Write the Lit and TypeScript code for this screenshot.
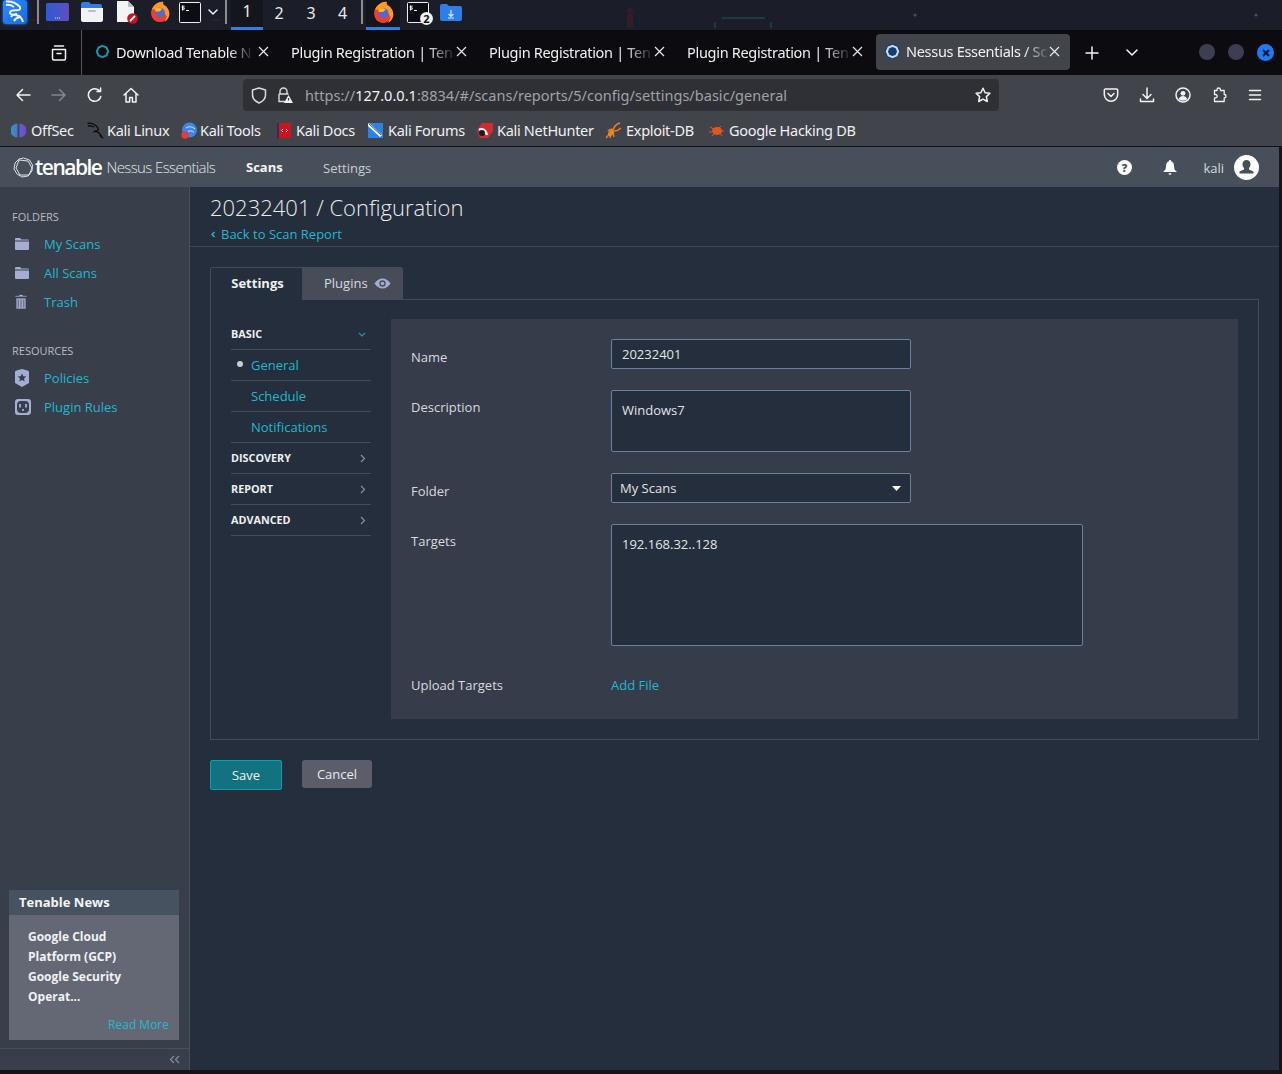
import { LitElement, html, css, svg } from "lit";
import { customElement } from "lit/decorators.js";

const ic = (w: number, h: number, body: unknown, vb = `0 0 ${w} ${h}`) =>
  html`<svg width=${w} height=${h} viewBox=${vb}>${body}</svg>`;

const S = `fill:none;stroke:#f2f2f2;stroke-width:1.5;stroke-linecap:round;stroke-linejoin:round`;
const line = (d: string, style = S) => svg`<path d=${d} style=${style}></path>`;

const firefox = (s: number) =>
  ic(s, s, svg`
    <circle cx="11.5" cy="12.5" r="9.5" fill="#e8412f"></circle>
    <path d="M3 9C5 3 11 0 15 1c-1 2 0 3 3 5 3 3 4 7 3 10-1 3-3 5-5 6 3-4 2-9-1-11-2-2-7-3-12-2z" fill="#ff9a1f"></path>
    <path d="M3 16c2 5 8 7 12 5 3-2 4-4 4-6-3 4-9 5-16 1z" fill="#f5392f"></path>
    <circle cx="11.5" cy="12" r="5" fill="#4f68d8"></circle>
    <path d="M6 9c2-2 5-2 8-1l-3 3H7z" fill="#ffb324"></path>`, "0 0 23 23");

const terminal = html`<svg width="22" height="21" viewBox="0 0 22 21">
  <rect x=".5" y=".5" width="21" height="20" rx="1" fill="#0c0d12" stroke="#f0f0f0"></rect>
  <path d="M3.5 3.5v5M5.6 4.2H3.2v1.6h2v1.5H2.8M7 8.5h3" fill="none" stroke="#f0f0f0" stroke-width="1"></path></svg>`;

const folderBlue = html`<svg width="22" height="17" viewBox="0 0 22 17">
  <path d="M0 2a2 2 0 0 1 2-2h5l2 2h11a2 2 0 0 1 2 2v11a2 2 0 0 1-2 2H2a2 2 0 0 1-2-2z" fill="#2f7de6"></path>
  <path d="M11 6v6M8.5 10l2.5 2.5 2.5-2.5M8 14h6" fill="none" stroke="#cfe3ff" stroke-width="1.2"></path></svg>`;

const tabIcon = (active: boolean) => html`<svg width="15" height="15" viewBox="0 0 15 15">
  ${active ? svg`<circle cx="7.5" cy="7.5" r="7.5" fill="#123f72"></circle>` : ""}
  <path d="M7.5 1.8 11.500 3.500 13.200 7.500 11.500 11.500 7.500 13.200 3.500 11.500 1.800 7.500 3.500 3.500z" fill="none" stroke=${active ? "#c9dbe9" : "#1a93ad"} stroke-width="2"></path></svg>`;

const navIcons = {
  back: ic(16, 14, line("M15 7H2M7.5 1.5 2 7l5.5 5.5")),
  fwd: ic(16, 14, line("M1 7h13M8.5 1.5 14 7l-5.5 5.5", S.replace("#f2f2f2", "#85878d"))),
  reload: ic(16, 16, line("M13.8 9.5A6.3 6.3 0 1 1 12 3.4M13.6 1v3.6H10")),
  home: ic(16, 16, line("M1 8l7-6.5L15 8M3 6.5V15h3.6v-4.5h2.8V15H13V6.5")),
  pocket: ic(16, 16, line("M2.5 2h11A1.2 1.2 0 0 1 14.7 3.2v4.3a6.7 6.7 0 0 1-13.4 0V3.2A1.2 1.2 0 0 1 2.5 2zM5 6.5l3 3 3-3")),
  download: ic(16, 16, line("M8 1v10M4 7.5 8 11.5l4-4M1.5 12v2.5h13V12")),
  account: ic(16, 16, svg`<circle cx="8" cy="8" r="7" style=${S}></circle><circle cx="8" cy="6.3" r="2.4" fill="#f2f2f2"></circle><path d="M3.6 12c1-2 2.6-3 4.4-3s3.400 1 4.400 3c-2.400 2.300-6.400 2.300-8.800 0z" fill="#f2f2f2"></path>`),
  ext: ic(16, 16, line("M6 3.500V2.700a1.700 1.700 0 0 1 3.400 0v.8h3.800v4h.1a1.700 1.700 0 0 1 0 3.400h-.1v3.600H3.500v-3.600h1a1.300 1.300 0 0 0 0-3.400h-1v-4z", S.replace("1.5", "1.3"))),
  menu: ic(16, 14, line("M2.500 2.500h11M2.500 7h11M2.500 11.500h11")),
};

const bmIcons: Record<string, unknown> = {
  offsec: html`<svg width="15" height="15" viewBox="0 0 15 15"><defs><linearGradient id="os" x1="0" x2="1"><stop offset="0" stop-color="#2b9ac9"></stop><stop offset="1" stop-color="#7a3fd0"></stop></linearGradient></defs><path d="M6.500 0.500A7 7 0 0 0 6.500 14.500zM8.500 0.500A7 7 0 0 1 8.500 14.500z" fill="url(#os)"></path></svg>`,
  kali: html`<svg width="17" height="17" viewBox="0 0 17 17"><path d="M0.500 1.500c3-.8 6 .2 8.500 2.300 2 1.700 2.700 3 2.200 4.200-.5 1.300-3 .7-4 1.700 2.300-.3 5.500 1 7 4.500.7 1 1.300 1.600 2 2-1.500-1-3-2-3.500-3.500M1 4c2-.5 4 0 6 1" fill="none" stroke="#0b0b0b" stroke-width="1.300"></path></svg>`,
  tools: html`<svg width="16" height="17" viewBox="0 0 16 17"><circle cx="8.500" cy="8" r="7.500" fill="#3a86e8"></circle><path d="M5 6c3-2 6-1.500 9 1M7 9.500c2-1 4-1 6 1" fill="none" stroke="#dbe9fb"></path><circle cx="4" cy="13" r="3.800" fill="#e33a3a"></circle></svg>`,
  docs: html`<svg width="14" height="17" viewBox="0 0 14 17"><rect width="14" height="15" y="1" fill="#c9151b"></rect><rect width="2" height="16" y="1" fill="#243456"></rect><path d="M6 7 4.500 8.500 6 10M9 7l1.500 1.500L9 10" fill="none" stroke="#fff"></path></svg>`,
  forums: html`<svg width="15" height="16" viewBox="0 0 15 16"><rect y="1" width="15" height="15" fill="#2b83e3"></rect><path d="M0 2l13 12" stroke="#fff" stroke-width="3"></path><path d="M1 2l12 11" stroke="#222" stroke-width=".8"></path></svg>`,
  hunter: html`<svg width="16" height="15" viewBox="0 0 16 15"><path d="M5 0h11v8l-5 7H3L0 8z" fill="#d42b2f"></path><path d="M2 7c3-2 7 0 8 5" fill="none" stroke="#fff" stroke-width="2.500"></path><circle cx="5" cy="10" r="3" fill="#1b1b1b"></circle></svg>`,
  exploit: html`<svg width="17" height="17" viewBox="0 0 17 17"><path d="M1 16 8 8M3 9c2-2 4-2 5-1M8 8c1-3 3-6 7-7M9 9c2 0 5-1 7-3M8 10l1 5M6 11l-1 5" fill="none" stroke="#e8871f" stroke-width="1.300"></path><ellipse cx="6" cy="11" rx="2.500" ry="3.500" transform="rotate(40 6 11)" fill="#e8871f"></ellipse></svg>`,
  ghdb: html`<svg width="15" height="13" viewBox="0 0 15 13"><ellipse cx="8" cy="7" rx="5" ry="4" fill="#e2571e"></ellipse><path d="M1 3l4 2M0 8h3M3 12l3-3M12 2 10 4M15 7h-3M13 12l-2-3" stroke="#e2571e"></path></svg>`,
};

const bookmarks = [
  ["offsec", "OffSec", 11, 5],
  ["kali", "Kali Linux", 87, 3],
  ["tools", "Kali Tools", 181, 3],
  ["docs", "Kali Docs", 277, 5],
  ["forums", "Kali Forums", 368, 5],
  ["hunter", "Kali NetHunter", 477, 4],
  ["exploit", "Exploit-DB", 605, 4],
  ["ghdb", "Google Hacking DB", 709, 5],
] as const;

const folderIc = html`<svg width="14" height="12" viewBox="0 0 14 12"><path d="M0 2.500V1a1 1 0 0 1 1-1h4l1.500 1.500H13a1 1 0 0 1 1 1zM0 3.500h14V11a1 1 0 0 1-1 1H1a1 1 0 0 1-1-1z" fill="#a4aed0"></path></svg>`;
const trashIc = html`<svg width="12" height="15" viewBox="0 0 12 15"><path d="M4 1.500V.5h4v1h4V3H0V1.500zM1 4h10v11H1zM3.200 5.500v8M6 5.500v8M8.800 5.500v8" fill="#a4aed0" stroke="#383e4a" stroke-width=".7"></path></svg>`;
const policyIc = html`<svg width="14" height="18" viewBox="0 0 14 18"><path d="M1.500 1.500 7 0l5.500 1.500A1.500 1.500 0 0 1 14 3v11l-7 4-7-4V3a1.500 1.500 0 0 1 1.500-1.500z" fill="#a4aed0"></path><path d="m7 4.500 1.300 2.800 3 .3-2.300 2 .7 3L7 11l-2.700 1.600.7-3-2.300-2 3-.3z" fill="#383e4a"></path></svg>`;
const pluginIc = html`<svg width="16" height="16" viewBox="0 0 16 16"><rect width="16" height="16" rx="3" fill="#a4aed0"></rect><rect x="2" y="2" width="12" height="12" rx="4" fill="#383e4a"></rect><path d="M5 5v3.500M11 5v3.500M8 10v2" stroke="#a4aed0" stroke-width="1.800"></path></svg>`;

@customElement("app-root")
export class AppRoot extends LitElement {
  static styles = css`
    :host { display: block; width: 1282px; height: 1074px; overflow: hidden; position: relative; background: #14151b; font-family: "Open Sans", "Noto Sans", sans-serif; }
    svg { display: block; flex: none; }
    .taskbar { height: 30px; background: #1b1e29; display: flex; position: relative; }
    .tb { height: 30px; display: flex; align-items: center; justify-content: center; box-sizing: border-box; flex: none; padding-bottom: 6px; color: #e8eaf0; font: 400 16px "Noto Sans", sans-serif; position: relative; z-index: 1; }
    .tb.on { border-bottom: 3px solid #2f7fe0; padding-bottom: 3px; background: #14161e; }
    .tb.ws { padding-bottom: 5px; }
    .tsep { width: 2px; height: 24px; background: #8a8c92; flex: none; position: relative; z-index: 1; }
    .kalibtn { width: 24px; height: 24px; border-radius: 3px; background: linear-gradient(135deg, #2f8dff, #1668e6); box-shadow: 0 0 3px #1f7dff; margin-left: 3px; margin-right: 10px; display: flex; justify-content: center; position: relative; z-index: 1; }
    .marks { position: absolute; left: 560px; top: 0; }
    .marksl { position: absolute; left: 0; top: 0; }
    .badge { position: absolute; left: 13px; top: 10px; }
    .termwrap { position: relative; }

    .tabbar { height: 45px; background: #0c0c10; display: flex; align-items: stretch; color: #f0f0f2; font: 400 14.5px "Noto Sans", sans-serif; letter-spacing: -.3px; }
    .tmgr { width: 81px; border-right: 1px solid #54565c; display: flex; align-items: center; justify-content: center; flex: none; }
    .tmgr svg { margin-left: 37px; }
    .tab { width: 198px; flex: none; box-sizing: border-box; display: flex; align-items: center; padding-left: 11px; padding-bottom: 2px; position: relative; }
    .tab.first { padding-left: 13px; }
    .tab.active { width: 194px; height: 36px; margin: 4px 0 0 2px; background: #42444c; border-radius: 4px; padding-left: 9px; }
    .tab .ttl { flex: none; white-space: nowrap; -webkit-mask-image: linear-gradient(to right, #000 84%, rgba(0,0,0,.12) 100%); mask-image: linear-gradient(to right, #000 84%, rgba(0,0,0,.12) 100%); }
    .tab.first .ttl { margin-left: 6px; }
    .tab.active .ttl { margin-left: 6px; }
    .tab .x { position: absolute; left: 176px; top: 16px; }
    .tab.active .x { left: 173px; top: 12px; }
    .tabplus { margin-left: 15px; align-self: center; }
    .tabchev { margin-left: 27px; align-self: center; }
    .wins { display: flex; gap: 13px; margin-left: 61px; align-self: center; }
    .wbtn { width: 16px; height: 16px; border-radius: 50%; background: #3b3f50; display: flex; align-items: center; justify-content: center; }
    .wbtn.close { width: 17px; height: 17px; background: #2079ef; }

    .toolbar { height: 40px; background: #42444c; display: flex; align-items: center; padding-left: 5px; }
    .nbtn { width: 36px; height: 32px; display: flex; align-items: center; justify-content: center; flex: none; }
    .urlbar { width: 756px; height: 32px; margin-left: 94px; margin-right: 94px; background: #2f3036; border-radius: 4px; display: flex; align-items: center; flex: none; box-sizing: border-box; padding-left: 8px; color: #a0a1a6; font: 400 14.5px "Noto Sans", sans-serif; position: relative; }
    .urlbar b { font-weight: 400; color: #f5f5f5; }
    .url { margin-left: 12px; white-space: nowrap; letter-spacing: .03px; }
    .lock { margin-left: 10px; }
    .star { position: absolute; right: 8px; top: 8px; }

    .bmbar { height: 31px; background: #42444c; border-bottom: 1px solid #111216; color: #f0f0f2; font: 400 14.5px "Noto Sans", sans-serif; letter-spacing: -.3px; position: relative; }
    .bm { position: absolute; top: 0; height: 30px; display: flex; align-items: center; white-space: nowrap; }

    .hdr { height: 40px; background: #47505a; display: flex; align-items: center; position: relative; color: #fff; }
    .brand { display: flex; align-items: center; margin-left: 13px; width: 233px; flex: none; }
    .tenable { font: 600 21px "Open Sans", sans-serif; letter-spacing: -1.5px; margin-left: 1px; }
    .ness { font: 300 15px "Open Sans", sans-serif; letter-spacing: -.6px; margin-left: 5px; color: #e4e6e9; }
    .scans { font: 700 13px "Open Sans", sans-serif; color: #f4f5f6; width: 77px; }
    .setlink { font-size: 13px; color: #c9cdd2; margin-top: 2px; }
    .hright { margin-left: auto; display: flex; align-items: center; }
    .kaliu { font-size: 13px; color: #d5d8dc; margin: 2px 10px 0 26px; }
    .avatar { margin-right: 23px; }
    .bell { margin-left: 31px; }

    .body { display: flex; height: 883px; }
    .side { width: 189px; flex: none; background: #383e4a; border-right: 1px solid #4a505c; display: flex; flex-direction: column; }
    .shead { font-size: 11px; color: #b9bcc2; margin-left: 12px; line-height: 14px; }
    .shead.f { margin-top: 23px; }
    .shead.r { margin-top: 28px; }
    .sitem { height: 29px; display: flex; align-items: center; color: #22b8cf; font-size: 13px; }
    .sitem.first { margin-top: 5px; }
    .sico { width: 44px; flex: none; display: flex; justify-content: flex-start; padding-left: 15px; box-sizing: border-box; }
    .news { margin: auto 10px 0 9px; background: #646874; height: 150px; }
    .news h4 { margin: 0; height: 25px; background: #475260; color: #f3f4f5; font: 700 13px/25px "Open Sans", sans-serif; padding-left: 10px; }
    .news p { margin: 12px 10px 0 19px; font: 700 12px/20px "Open Sans", sans-serif; color: #f1f2f3; }
    .news .more { display: block; text-align: right; margin: 9px 10px 0 0; font-size: 12px; line-height: 18px; color: #22b8cf; }
    .foot { margin-top: 8px; height: 21px; border-top: 1px solid #4a505c; display: flex; align-items: center; justify-content: flex-end; padding-right: 9px; }

    .main { flex: none; width: 1089px; background: #252e3c; color: #d8dade; position: relative; }
    .title { font: 300 22px/30px "Open Sans", sans-serif; color: #e9ebed; margin: 5px 0 0 20px; }
    .back { color: #22b8cf; font-size: 13px; line-height: 18px; margin: 3px 0 0 21px; display: flex; align-items: center; gap: 6px; height: 18px; }
    .rule { height: 1px; background: #3d4553; margin-top: 3px; }
    .tabs { display: flex; margin: 20px 0 0 20px; height: 33px; position: relative; z-index: 1; }
    .t1 { width: 93px; box-sizing: border-box; height: 33px; border: 1px solid #454c59; border-bottom: none; border-radius: 3px 0 0 0; background: #252e3c; font-weight: 700; font-size: 13px; color: #eef0f2; display: flex; align-items: center; justify-content: center; padding: 0 0 2px 2px; }
    .t2 { width: 100px; height: 32px; box-sizing: border-box; background: #474c58; border-radius: 0 3px 0 0; font-size: 13px; color: #d9dbdf; display: flex; align-items: center; padding-left: 21px; gap: 6px; }
    .panel { margin: -1px 0 0 20px; width: 1049px; height: 441px; box-sizing: border-box; border: 1px solid #454c59; padding: 19px 20px; display: flex; gap: 20px; }
    .menu { width: 140px; flex: none; }
    .mrow { height: 31px; box-sizing: border-box; border-bottom: 1px solid #454c59; display: flex; align-items: center; justify-content: space-between; font: 700 10.8px "Open Sans", sans-serif; color: #eef0f2; padding-right: 5px; padding-bottom: 1px; }
    .mrow > svg { margin-top: 2px; }
    .mrow.s { justify-content: flex-start; font: 400 13px "Open Sans", sans-serif; color: #22b8cf; padding-left: 20px; position: relative; }
    .dot { position: absolute; left: 6px; top: 11px; width: 6px; height: 6px; border-radius: 50%; background: #c9cbd0; }
    .form { flex: none; width: 847px; height: 400px; background: #363c4a; box-sizing: border-box; padding: 20px 20px 0; }
    .frow { display: flex; font-size: 13px; color: #d8dade; }
    .lbl { width: 200px; flex: none; line-height: 18px; }
    .field { background: #252e3c; border: 1px solid #6b7f9e; border-radius: 2px; box-sizing: border-box; color: #e2e4e8; font-size: 13px; line-height: 18px; padding: 5px 10px; }
    .f300 { width: 300px; }
    .f1 { height: 30px; }
    .f2 { height: 62px; padding-top: 10px; }
    .f3 { height: 30px; padding-left: 8px; display: flex; justify-content: space-between; align-items: center; padding-right: 9px; }
    .f4 { width: 472px; height: 122px; padding-top: 10px; }
    .r1 { margin-bottom: 21px; } .r1 .lbl { padding-top: 9px; }
    .r2 { margin-bottom: 21px; } .r2 .lbl { padding-top: 8px; }
    .r3 { margin-bottom: 21px; } .r3 .lbl { padding-top: 9px; }
    .r4 { margin-bottom: 30px; } .r4 .lbl { padding-top: 8px; }
    .add { color: #22b8cf; }
    .btns { display: flex; gap: 20px; margin: 20px 0 0 20px; align-items: flex-start; }
    .save { width: 72px; height: 30px; box-sizing: border-box; background: #137280; border: 1px solid #0c9fb0; border-radius: 2px; color: #eef2f4; font-size: 13px; display: flex; align-items: center; justify-content: center; }
    .cancel { width: 70px; height: 28px; background: #5b5e69; border-radius: 3px; color: #e9eaec; font-size: 13px; display: flex; align-items: center; justify-content: center; }
    .edge { position: absolute; right: 0; top: 146px; width: 3px; height: 928px; background: #14151b; }
    .bottomstrip { height: 4px; background: #14151b; }
  `;

  private tb(w: number, c: unknown, cls = "") {
    return html`<div class="tb ${cls}" style="width:${w}px">${c}</div>`;
  }

  render() {
    const x = ic(11, 11, line("M1 1l9 9M10 1l-9 9", "stroke:#e8e8ea;stroke-width:1.200;fill:none"));
    const rc = ic(6, 9, line("M1 1l3.500 3.500L1 8", "stroke:#8390a8;stroke-width:1.200;fill:none"));
    return html`
      <div class="taskbar">
        <svg class="marksl" width="240" height="30" viewBox="0 0 240 30"><path d="M28 20h8M88 20h12M49 25v2M88 25v2M118 20h10M118 25v2M212 20h10M211 25v2" stroke="#3d1e2a" fill="none"></path></svg>
        <div class="kalibtn">
          <svg width="24" height="24" viewBox="0 0 24 24"><path d="M3 1.500c5-.5 10 1.500 13 4.500 2 2 1.500 4-1.500 4.200-4 .2-7-.5-7.500 2.300-.4 3 5 1.500 9 3.300 2 1 3 3 4 6.200M3 5c3-.5 6 .5 8 2M14 14c-3 0-5 1-6 3M17 17c-3 .5-5 2-6 4" fill="none" stroke="#eef6ff" stroke-width="2"></path></svg>
        </div>
        <div class="tsep"></div>
        <div style="width:7px"></div>
        ${this.tb(23, html`<svg width="23" height="18" viewBox="0 0 23 18"><defs><linearGradient id="dk" x1="0" x2="1"><stop offset="0" stop-color="#2d5bd6"></stop><stop offset="1" stop-color="#5d4ec0"></stop></linearGradient></defs><rect width="23" height="18" rx="1.500" fill="url(#dk)"></rect><path d="M9 15h1.200M11 15h1.200M13 15h1.200" stroke="#d7def6"></path></svg>`)}
        <div style="width:12px"></div>
        ${this.tb(22, html`<svg width="22" height="20" viewBox="0 0 22 20"><path d="M0 2a2 2 0 0 1 2-2h6l2 2h9a2 2 0 0 1 2 2v3H0z" fill="#2f7de6"></path><path d="M0 6h22v12a2 2 0 0 1-2 2H2a2 2 0 0 1-2-2z" fill="#f2f2f2"></path><rect x="7" y="8" width="8" height="2" rx="1" fill="#bdbdbd"></rect></svg>`)}
        <div style="width:14px"></div>
        ${this.tb(21, html`<svg width="21" height="23" viewBox="0 0 21 23"><path d="M0 0h11l6 6v15H0z" fill="#f4f4f4"></path><path d="M11 0l6 6h-6z" fill="#bdbdbd"></path><circle cx="15.500" cy="17.500" r="5.300" fill="#c8141c"></circle><path d="M13 20l5-5" stroke="#fff" stroke-width="1.800"></path></svg>`)}
        <div style="width:11px"></div>
        ${this.tb(22, firefox(22))}
        <div style="width:8px"></div>
        ${this.tb(22, terminal)}
        <div style="width:7px"></div>
        ${this.tb(10, ic(10, 6, line("M1 1l4 4 4-4")))}
        <div style="width:7px"></div>
        <div class="tsep"></div>
        <div style="width:4px"></div>
        ${this.tb(32, "1", "on ws")}
        ${this.tb(32, "2", "ws")}
        ${this.tb(32, "3", "ws")}
        ${this.tb(31, "4", "ws")}
        <div style="width:3px"></div>
        <div class="tsep"></div>
        <div style="width:3px"></div>
        ${this.tb(34, firefox(23), "on")}
        <div style="width:6px"></div>
        ${this.tb(24, html`<div class="termwrap">${terminal}<svg class="badge" width="13" height="13" viewBox="0 0 13 13"><circle cx="6.500" cy="6.500" r="6.500" fill="#efefef"></circle><text x="6.500" y="10.500" text-anchor="middle" font-size="11" font-weight="700" font-family="Open Sans" fill="#111">2</text></svg></div>`)}
        <div style="width:10px"></div>
        ${this.tb(22, folderBlue)}
        <svg class="marks" width="720" height="30" viewBox="0 0 720 30"><path d="M70 28V10M66 13l4-5 4 5M68 14v14M72 14v14" stroke="#4a1c24" fill="none"></path><path d="M162 18h43M155 22v6M211 22v6" stroke="#1f4644" stroke-width="1.500" fill="none"></path><circle cx="355" cy="15" r="1.500" fill="#4a4e58"></circle><circle cx="696" cy="15" r="1.500" fill="#4a4e58"></circle></svg>
      </div>

      <div class="tabbar">
        <div class="tmgr">${ic(16, 16, line("M3.500 1h9M1.500 4.500h13v9a1.500 1.500 0 0 1-1.500 1.500H3a1.500 1.500 0 0 1-1.500-1.500zM6 8.500h4"))}</div>
        <div class="tab first">${tabIcon(false)}<span class="ttl">Download Tenable N</span><span class="x">${x}</span></div>
        <div class="tab"><span class="ttl">Plugin Registration | Ten</span><span class="x">${x}</span></div>
        <div class="tab"><span class="ttl">Plugin Registration | Ten</span><span class="x">${x}</span></div>
        <div class="tab"><span class="ttl">Plugin Registration | Ten</span><span class="x">${x}</span></div>
        <div class="tab active">${tabIcon(true)}<span class="ttl">Nessus Essentials / Sc</span><span class="x">${x}</span></div>
        <div class="tabplus">${ic(14, 14, line("M7 1v12M1 7h12"))}</div>
        <div class="tabchev">${ic(12, 7, line("M1 1l5 5 5-5"))}</div>
        <div class="wins"><div class="wbtn"></div><div class="wbtn"></div><div class="wbtn close">${ic(8, 8, line("M1 1l6 6M7 1l-6 6", "stroke:#0b1730;stroke-width:2;fill:none"))}</div></div>
      </div>

      <div class="toolbar">
        <div class="nbtn">${navIcons.back}</div>
        <div class="nbtn">${navIcons.fwd}</div>
        <div class="nbtn">${navIcons.reload}</div>
        <div class="nbtn">${navIcons.home}</div>
        <div class="urlbar">
          ${ic(16, 17, line("M8 1l6.500 2v5c0 4-3 6.500-6.500 8-3.500-1.500-6.500-4-6.500-8V3z", S.replace("#f2f2f2", "#dcdcde")))}
          <span class="lock"><svg width="16" height="16" viewBox="0 0 16 16"><path d="M3 7V4.500a3.500 3.500 0 0 1 7 0V7M2 7h9.500M2 7v7.500h6" fill="none" stroke="#dcdcde" stroke-width="1.400"></path><path d="M11.500 8 16 16H7z" fill="#f2f2f2"></path><path d="M11.500 11v2.500" stroke="#333" stroke-width="1.200"></path></svg></span>
          <span class="url">https://<b>127.0.0.1</b>:8834/#/scans/reports/5/config/settings/basic/general</span>
          <span class="star">${ic(16, 16, line("M8 1.200l2.100 4.500 4.800.6-3.500 3.300.9 4.900L8 12.100l-4.300 2.400.9-4.900L1.100 6.300l4.800-.6z"))}</span>
        </div>
        <div class="nbtn">${navIcons.pocket}</div>
        <div class="nbtn">${navIcons.download}</div>
        <div class="nbtn">${navIcons.account}</div>
        <div class="nbtn">${navIcons.ext}</div>
        <div class="nbtn">${navIcons.menu}</div>
      </div>

      <div class="bmbar">
        ${bookmarks.map(([k, t, left, gap]) => html`<div class="bm" style="left:${left}px;gap:${gap}px">${bmIcons[k]}<span>${t}</span></div>`)}
      </div>

      <div class="hdr">
        <div class="brand">
          <svg width="21" height="21" viewBox="0 0 21 21"><path d="M10.500 1l6 2 3 5-.5 6-4 5-6 1-5-3-3-5 1-6 4-4z M6 3l9 1 4 7-3 7-9 0-4-7z" fill="none" stroke="#eef0f2" stroke-width=".9"></path></svg>
          <span class="tenable">tenable</span><span class="ness">Nessus Essentials</span>
        </div>
        <div class="scans">Scans</div>
        <div class="setlink">Settings</div>
        <div class="hright">
          <svg width="15" height="15" viewBox="0 0 15 15"><circle cx="7.500" cy="7.500" r="7.500" fill="#fff"></circle><text x="7.500" y="11.500" text-anchor="middle" font-size="11" font-weight="800" font-family="Open Sans" fill="#47505a">?</text></svg>
          <span class="bell"><svg width="14" height="15" viewBox="0 0 14 15"><path d="M7 0a1 1 0 0 1 1 1.200C10.500 2 11 4 11 6.500c0 2.500 1 4 3 5.500H0c2-1.500 3-3 3-5.500C3 4 3.500 2 6 1.200A1 1 0 0 1 7 0zM5.500 13.200h3a1.500 1.500 0 0 1-3 0z" fill="#fff"></path></svg></span>
          <span class="kaliu">kali</span>
          <svg class="avatar" width="25" height="25" viewBox="0 0 25 25"><circle cx="12.500" cy="12.500" r="12.500" fill="#fff"></circle><path d="M12.500 5c2.500 0 4 1.800 4 4.200 0 1.800-.7 3-1.500 3.800v1.500l4.500 2v2h-14v-2l4.500-2V13c-.8-.8-1.500-2-1.500-3.800C8.500 6.800 10 5 12.500 5z" fill="#47505a"></path></svg>
        </div>
      </div>

      <div class="body">
        <aside class="side">
          <div class="shead f">FOLDERS</div>
          <div class="sitem first"><span class="sico">${folderIc}</span>My Scans</div>
          <div class="sitem"><span class="sico">${folderIc}</span>All Scans</div>
          <div class="sitem"><span class="sico">${trashIc}</span>Trash</div>
          <div class="shead r">RESOURCES</div>
          <div class="sitem first"><span class="sico">${policyIc}</span>Policies</div>
          <div class="sitem"><span class="sico">${pluginIc}</span>Plugin Rules</div>
          <div class="news">
            <h4>Tenable News</h4>
            <p>Google Cloud<br />Platform (GCP)<br />Google Security<br />Operat...</p>
            <span class="more">Read More</span>
          </div>
          <div class="foot">${ic(11, 9, line("M5 1 1.500 4.500 5 8M10 1 6.500 4.500 10 8", "stroke:#8390a8;stroke-width:1.200;fill:none"))}</div>
        </aside>
        <main class="main">
          <div class="title">20232401 / Configuration</div>
          <div class="back">${ic(4, 7, line("M3.500 1 1 3.500 3.500 6", "stroke:#22b8cf;stroke-width:1.500;fill:none"))}<span>Back to Scan Report</span></div>
          <div class="rule"></div>
          <div class="tabs">
            <div class="t1">Settings</div>
            <div class="t2">Plugins
              <svg width="17" height="11" viewBox="0 0 17 11"><path d="M.5 5.500C3 2 5.500.5 8.500.5s5.500 1.500 8 5c-2.500 3.500-5 5-8 5s-5.500-1.500-8-5z" fill="#a4aed0"></path><circle cx="8.500" cy="5.500" r="3.200" fill="#474c58"></circle><circle cx="8.500" cy="5.500" r="1.800" fill="#a4aed0"></circle></svg>
            </div>
          </div>
          <div class="panel">
            <div class="menu">
              <div class="mrow">BASIC ${ic(8, 5, line("M1 1l3 3 3-3", "stroke:#1b96a8;stroke-width:1.200;fill:none"))}</div>
              <div class="mrow s"><i class="dot"></i>General</div>
              <div class="mrow s">Schedule</div>
              <div class="mrow s">Notifications</div>
              <div class="mrow">DISCOVERY ${rc}</div>
              <div class="mrow">REPORT ${rc}</div>
              <div class="mrow">ADVANCED ${rc}</div>
            </div>
            <div class="form">
              <div class="frow r1"><div class="lbl">Name</div><div class="field f300 f1">20232401</div></div>
              <div class="frow r2"><div class="lbl">Description</div><div class="field f300 f2">Windows7</div></div>
              <div class="frow r3"><div class="lbl">Folder</div><div class="field f300 f3">My Scans ${ic(9, 5, svg`<path d="M0 0h9L4.500 5z" fill="#fff"></path>`)}</div></div>
              <div class="frow r4"><div class="lbl">Targets</div><div class="field f4">192.168.32..128</div></div>
              <div class="frow"><div class="lbl">Upload Targets</div><div class="add">Add File</div></div>
            </div>
          </div>
          <div class="btns"><div class="save">Save</div><div class="cancel">Cancel</div></div>
        </main>
      </div>
      <div class="bottomstrip"></div>
      <div class="edge"></div>
    `;
  }
}
